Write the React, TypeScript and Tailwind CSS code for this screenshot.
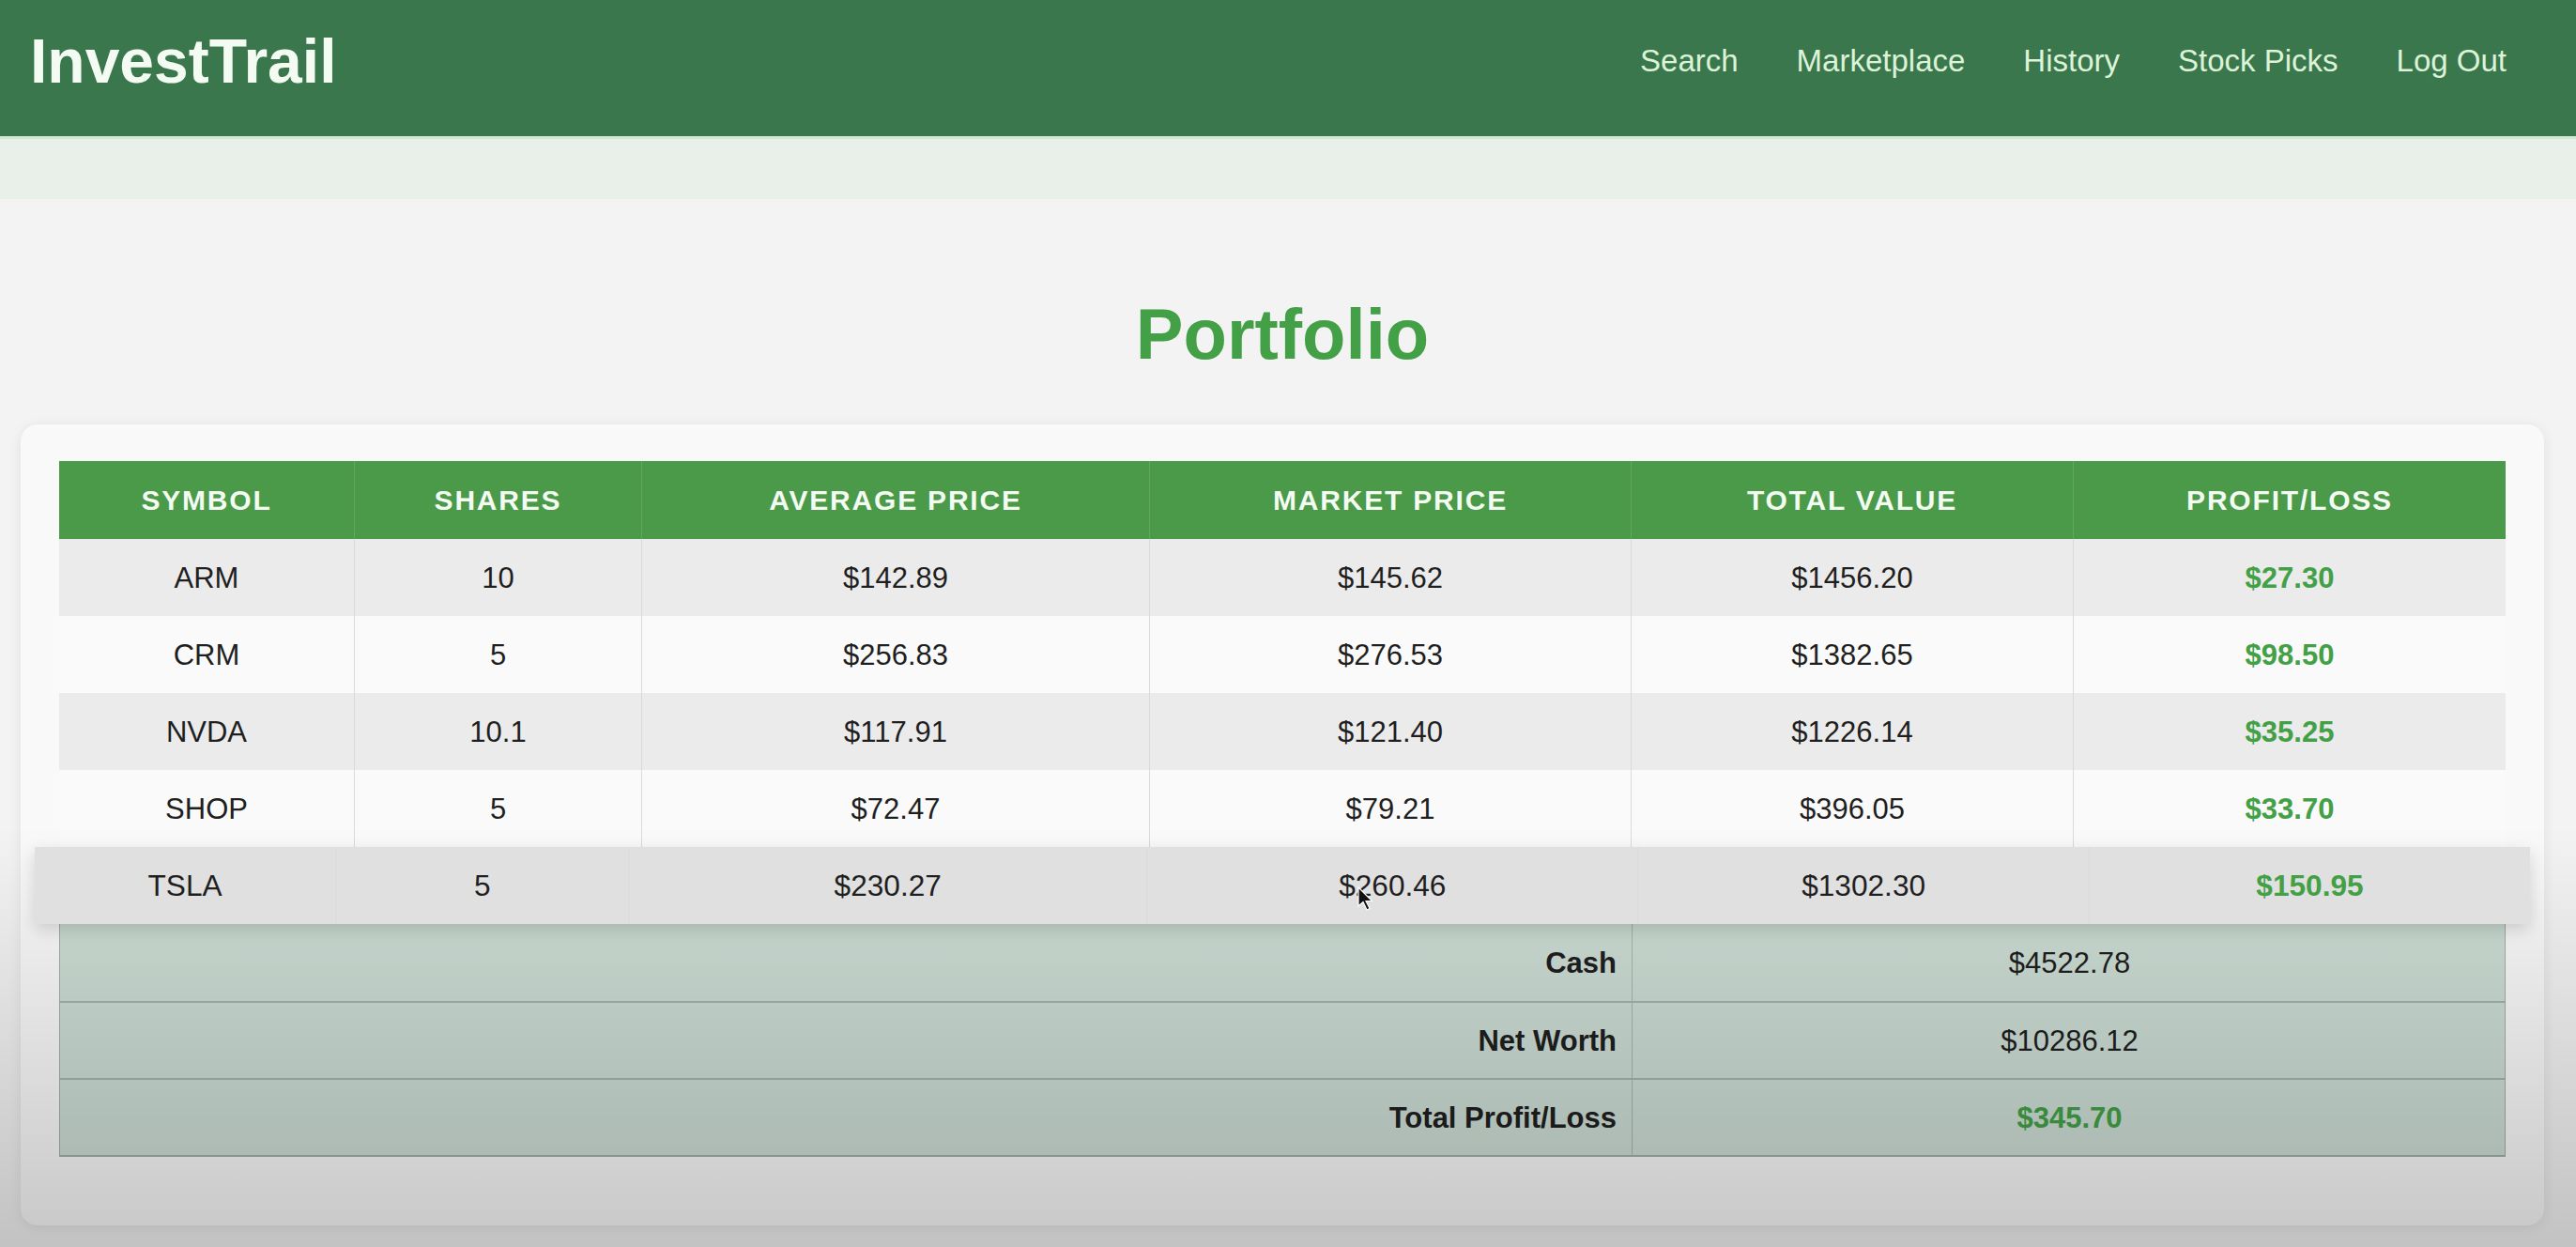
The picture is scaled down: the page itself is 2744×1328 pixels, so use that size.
const holdings = [
  { symbol: "ARM", shares: "10", avg: "$142.89", market: "$145.62", total: "$1456.20", pl: "$27.30" },
  { symbol: "CRM", shares: "5", avg: "$256.83", market: "$276.53", total: "$1382.65", pl: "$98.50" },
  { symbol: "NVDA", shares: "10.1", avg: "$117.91", market: "$121.40", total: "$1226.14", pl: "$35.25" },
  { symbol: "SHOP", shares: "5", avg: "$72.47", market: "$79.21", total: "$396.05", pl: "$33.70" },
  { symbol: "TSLA", shares: "5", avg: "$230.27", market: "$260.46", total: "$1302.30", pl: "$150.95" },
];

const headers = ["SYMBOL", "SHARES", "AVERAGE PRICE", "MARKET PRICE", "TOTAL VALUE", "PROFIT/LOSS"];

const links = ["Search", "Marketplace", "History", "Stock Picks", "Log Out"];

const cols = "grid grid-cols-[315px_306px_541px_513px_471px_460px]";

export default function App() {
  return (
    <div className="relative min-h-screen overflow-hidden bg-[#f3f3f3] font-['Liberation_Sans',Arial,sans-serif] text-[#1f1f1f]">
      <header className="flex h-[145px] items-center justify-between bg-[#3a774d] pb-[16px] pl-[32px] pr-[74px]">
        <h1 className="text-[66px] font-bold leading-none text-[#f4fbf2]">InvestTrail</h1>
        <nav className="flex gap-[62px] text-[33px] leading-none text-[#dcf3d8]">
          {links.map((link) => (
            <a key={link} href="#">
              {link}
            </a>
          ))}
        </nav>
      </header>
      <div className="h-[67px] border-t-[3px] border-[#d3ead2] bg-[#e9f0e9]" />

      <main className="pl-[22px] pr-[34px]">
        <h2 className="mt-[106px] mb-[58px] text-center text-[76px] font-bold leading-none text-[#43a047]">
          Portfolio
        </h2>

        <section className="rounded-[18px] bg-[#f9f9f9] px-[41px] pt-[39px] pb-[73px] shadow-[0_2px_14px_rgba(0,0,0,0.08)]">
          <div className="text-[31px] leading-none">
            <div className={`${cols} h-[83px] bg-[#4a9a49] text-[30px] font-bold tracking-[0.06em] text-[#f3fbf2]`}>
              {headers.map((h, i) => (
                <div
                  key={h}
                  className={`flex items-center justify-center ${i < 5 ? "border-r border-[#62a760]" : ""}`}
                >
                  {h}
                </div>
              ))}
            </div>

            {holdings.map((row, idx) => {
              const hovered = row.symbol === "TSLA";
              const bg = hovered ? "bg-[#e0e0e0]" : idx % 2 === 0 ? "bg-[#ebebeb]" : "bg-[#fafafa]";
              return (
                <div
                  key={row.symbol}
                  className={`${cols} h-[82px] ${bg} ${hovered ? "relative z-10 scale-x-[1.02] shadow-[0_6px_16px_rgba(0,0,0,0.14)]" : ""}`}
                >
                  {[row.symbol, row.shares, row.avg, row.market, row.total].map((v, i) => (
                    <div key={i} className="flex items-center justify-center border-r border-[#dadada]">
                      {v}
                    </div>
                  ))}
                  <div className="flex items-center justify-center font-bold text-[#43a047]">{row.pl}</div>
                </div>
              );
            })}

            <div className="border-x border-b-2 border-[#9fafa7] bg-[#ccddd4]">
              {[
                { label: "Cash", value: "$4522.78", green: false },
                { label: "Net Worth", value: "$10286.12", green: false },
                { label: "Total Profit/Loss", value: "$345.70", green: true },
              ].map((r, i) => (
                <div key={r.label} className={`${cols} h-[82px] ${i > 0 ? "border-t-2 border-[#a3b4ab]" : ""}`}>
                  <div className="col-span-4 flex items-center justify-end border-r border-[#a6b6ae] pr-[16px] font-bold">
                    {r.label}
                  </div>
                  <div
                    className={`col-span-2 flex items-center justify-center ${r.green ? "font-bold text-[#43a047]" : ""}`}
                  >
                    {r.value}
                  </div>
                </div>
              ))}
            </div>
          </div>
        </section>
      </main>

      <svg
        className="pointer-events-none absolute left-[1446px] top-[944px] z-20"
        width="18"
        height="28"
        viewBox="0 0 18 28"
      >
        <path d="M1 1 L1 21 L6 16.5 L10 25 L13 23.5 L9 15.5 L15.5 15.5 Z" fill="#111" stroke="#fff" strokeWidth="1.2" />
      </svg>

      <div className="pointer-events-none absolute inset-x-0 bottom-0 h-[448px] bg-gradient-to-b from-transparent to-black/20" />
    </div>
  );
}
